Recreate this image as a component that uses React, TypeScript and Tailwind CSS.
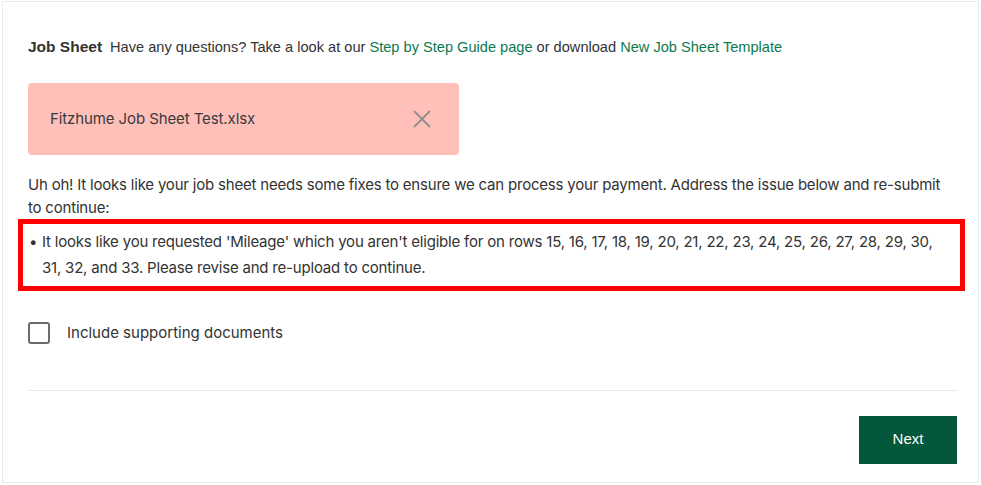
import React from "react";

export default function App() {
  return (
    <div className="w-[981px] h-[485px] bg-white pt-[1px] pl-[2px]">
      <div className="w-[977px] h-[482px] border border-[#ebebeb] pl-[25px] pr-[21px] pt-[35px] font-['Inter',sans-serif] tracking-[-0.2px] text-[#333]">
        {/* Header */}
        <div className="flex items-baseline h-[20px] leading-[20px] font-['Liberation_Sans',sans-serif] tracking-normal">
          <span className="text-[15.5px] font-bold text-[#333]">Job Sheet</span>
          <span className="ml-[8px] text-[14.6px] text-[#333]">
            Have any questions? Take a look at our{" "}
            <a className="text-[#0b7a50]">Step by Step Guide page</a> or download{" "}
            <a className="text-[#0b7a50]">New Job Sheet Template</a>
          </span>
        </div>

        {/* Uploaded file */}
        <div className="mt-[26px] w-[431px] h-[72px] rounded-[4px] bg-[#ffc0ba] flex items-center justify-between pl-[22px] pr-[28px]">
          <span className="text-[15px] text-[#3a3a3a] tracking-[-0.1px]">Fitzhume Job Sheet Test.xlsx</span>
          <svg width="18" height="18" viewBox="0 0 18 18" className="text-[#8f8f8f]">
            <path d="M1 1 L17 17 M17 1 L1 17" stroke="currentColor" strokeWidth="1.8" fill="none" />
          </svg>
        </div>

        {/* Error message */}
        <p className="mt-[18px] text-[15px] leading-[23px] text-[#333]">
          Uh oh! It looks like your job sheet needs some fixes to ensure we can process your payment. Address the issue below and re-submit to continue:
        </p>
        <div className="-ml-[10px] -mr-[8px] border-[5px] border-[#ff0000] pl-[6px] pr-[10px] py-[5px]">
          <div className="flex text-[15px] leading-[26px] text-[#333]">
            <span className="w-[13px] shrink-0">•</span>
            <span>
              It looks like you requested 'Mileage' which you aren't eligible for on rows 15, 16, 17, 18, 19, 20, 21, 22, 23, 24, 25, 26, 27, 28, 29, 30, 31, 32, and 33. Please revise and re-upload to continue.
            </span>
          </div>
        </div>

        {/* Checkbox */}
        <label className="mt-[31px] flex items-center gap-[17px]">
          <span className="w-[22px] h-[22px] rounded-[3px] border-2 border-[#6b6b6b] bg-white" />
          <span className="text-[15px] text-[#333] tracking-normal">Include supporting documents</span>
        </label>

        <div className="mt-[45px] h-px bg-[#e6e6e6]" />

        <div className="mt-[25px] flex justify-end">
          <button className="w-[98px] h-[48px] bg-[#03573a] text-white text-[15px] font-medium font-['Liberation_Sans',sans-serif] tracking-normal">
            Next
          </button>
        </div>
      </div>
    </div>
  );
}
